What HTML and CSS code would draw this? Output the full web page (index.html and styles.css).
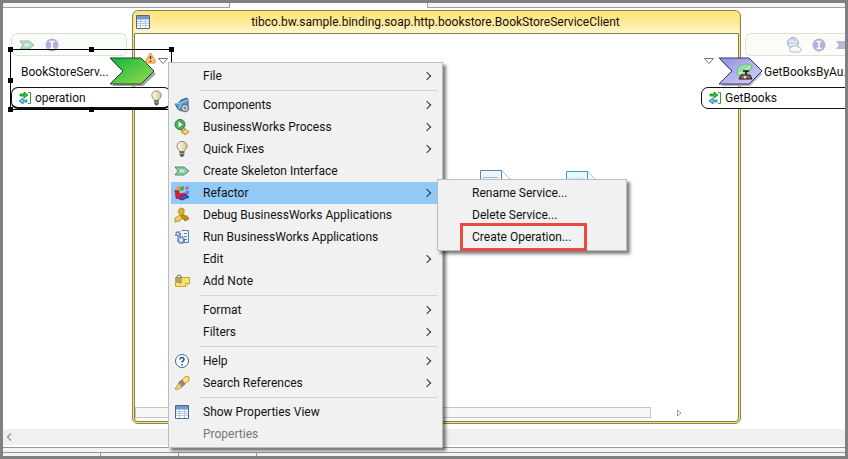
FILE: index.html
```html
<!DOCTYPE html>
<html lang="en">

<head>
    <meta charset="utf-8">
    <meta name="viewport" content="width=device-width, initial-scale=1.0">
    <title>BookStoreServiceClient</title>
    <link rel="stylesheet" href="styles.css">
</head>

<body>
    <svg class="defs" width="0" height="0" aria-hidden="true">
        <defs>
            <linearGradient id="green" x1="0" y1="0" x2="1" y2="1">
                <stop offset="0" stop-color="#12b53c" />
                <stop offset="1" stop-color="#9bdc50" />
            </linearGradient>
            <linearGradient id="violet" x1="0" y1="0" x2="1" y2="1">
                <stop offset="0" stop-color="#8f8fe0" />
                <stop offset="1" stop-color="#d6d6fa" />
            </linearGradient>
            <linearGradient id="glass" x1="0" y1="0" x2="1" y2="0">
                <stop offset="0" stop-color="#fffdf0" />
                <stop offset="1" stop-color="#d9c795" />
            </linearGradient>
            <symbol id="bulb" viewBox="0 0 16 16">
                <path d="M5.500 10.500C5.500 8.500 3 8 3 5a5 4.600 0 0 1 10 0c0 3-2.500 3.500-2.500 5.500z" fill="url(#glass)" stroke="#8f8468" />
                <path d="M6 11h4v3l-1 1.500H7L6 14z" fill="#666" stroke="#444" stroke-width=".6" />
                <path d="M6 12.500h4" stroke="#ccc" stroke-width=".7" />
            </symbol>
            <symbol id="swap" viewBox="0 0 14 14">
                <path d="M2 3h4V1l4 3-4 3V5H2z" fill="#35c832" stroke="#16801c" stroke-width=".8" />
                <path d="M9 9H5V7L1 10l4 3v-2h4z" fill="#5fd2e8" stroke="#19778e" stroke-width=".8" />
                <path d="M10 1.500h2.500v11H10" fill="none" stroke="#27a535" />
            </symbol>
            <symbol id="sheet" viewBox="0 0 14 14">
                <path d="M.5.5h13v13H.5z" fill="#fff" stroke="#4a6a94" />
                <path d="M1 1h12v3H1z" fill="#6f9bd0" />
                <path d="M1 4.500h12M1 6.500h12M1 8.500h12M1 10.500h12M4.500 4v9M9.500 4v9" stroke="#a5b9d4" stroke-width=".8" />
            </symbol>
            <symbol id="skeleton" viewBox="0 0 16 10">
                <path d="M1 1h9l5 4-5 4H1l3-4z" fill="#8fd3a6" stroke="#4d8d68" />
                <path d="M4 3h5.500L12 5 9.500 7H4l1.500-2z" fill="#bfe9ca" stroke="#62a87c" stroke-width=".6" />
            </symbol>
            <symbol id="port" viewBox="0 0 14 14">
                <circle cx="7" cy="7" r="6.500" fill="#8b7dc8" />
                <path d="M4.500 3.500h5M4.500 10.500h5M7 3.500v7" stroke="#fff" stroke-width="1.600" />
            </symbol>
        </defs>
    </svg>

    <div class="tabs">
        <span class="tab-first"></span>
        <span class="tab-active"></span>
        <span class="tab-rest"></span>
    </div>

    <main class="canvas">
        <section class="process">
            <h1><svg width="14" height="14"><use href="#sheet" /></svg><span>tibco.bw.sample.binding.soap.http.bookstore.BookStoreServiceClient</span></h1>
            <div class="process-body">
                <div class="documents">
                    <svg width="32" height="38" viewBox="0 0 32 38">
                        <path d="M.5.5h21l10 10v27H.5z" fill="#eef5fb" stroke="#5b86b0" />
                        <path d="M21.500.5v10h10" fill="#fff" stroke="#5b86b0" />
                        <path d="M3 7.500h15M3 14.500h25" stroke="#9bbcd9" />
                    </svg>
                    <svg width="32" height="38" viewBox="0 0 32 38">
                        <path d="M.5 1.500h21l10 10v26H.5z" fill="#e6f8fd" stroke="#3f9fc0" />
                        <path d="M21.500 1.500v10h10" fill="#fff" stroke="#3f9fc0" />
                        <path d="M3 7.500h15v10H3z" fill="#c9ecf6" />
                    </svg>
                </div>
                <div class="process-scroll">
                    <span class="thumb"></span>
                    <svg width="5" height="8" viewBox="0 0 5 8"><path d="M.5 1v6l3.500-3z" fill="#fff" stroke="#999" /></svg>
                </div>
            </div>
        </section>

        <div class="lane lane-left">
            <svg width="16" height="10"><use href="#skeleton" /></svg>
            <svg width="14" height="14"><use href="#port" /></svg>
        </div>

        <div class="lane lane-right">
            <svg width="16" height="16" viewBox="0 0 16 16">
                <circle cx="7" cy="6" r="5.500" fill="#a8bfdc" stroke="#7187ad" />
                <path d="M3 5c3-3 6 2 8-1M3 9c3-3 5 0 7-2" stroke="#fff" fill="none" />
                <path d="M6 15a2.500 2.500 0 0 1 0-5 3.500 3 0 0 1 6 0 2.500 2.500 0 0 1 1 5z" fill="#f2f5f8" stroke="#8894a4" />
            </svg>
            <svg width="14" height="14"><use href="#port" /></svg>
            <svg width="12" height="10" viewBox="0 0 12 10"><path d="M0 1h12v8H0l3-4z" fill="#9a83bd" /></svg>
        </div>

        <div class="node service">
            <div class="node-title">
                <span>BookStoreServ...</span>
                <svg width="48" height="30" viewBox="0 0 48 30">
                    <path d="M3 4h31l13 13-13 12H3l13-12z" fill="#a4a4a4" />
                    <path d="M1 1h31l13 13-13 13H1l13-13z" fill="url(#green)" stroke="#17452a" />
                </svg>
            </div>
            <div class="operation">
                <svg width="14" height="14"><use href="#swap" /></svg>
                <span>operation</span>
                <svg class="hint" width="15" height="16"><use href="#bulb" /></svg>
            </div>
            <svg class="warning" width="11" height="12" viewBox="0 0 11 12">
                <path d="M5.500 1L10 8v3H1V8z" fill="#ffc978" stroke="#d98a2b" stroke-linejoin="round" />
                <path d="M5.500 4v3M5.500 8.500v1.500" stroke="#5a3000" stroke-width="1.500" />
            </svg>
            <svg class="toggle" width="10" height="6" viewBox="0 0 10 6"><path d="M.5.5h9L5 5.500z" fill="#fff" stroke="#777" /></svg>
            <i class="handle top left"></i>
            <i class="handle top center"></i>
            <i class="handle top right"></i>
            <i class="handle middle left"></i>
            <i class="handle bottom left"></i>
            <i class="handle bottom center"></i>
        </div>

        <div class="node reference">
            <div class="node-title">
                <svg width="46" height="30" viewBox="0 0 46 30">
                    <path d="M3 4h29l12 13-12 12H3l13-12z" fill="#b4b4c4" />
                    <path d="M1 1h30l13 13-13 13H1l13-13z" fill="url(#violet)" stroke="#34346a" />
                    <path d="M19 13c1-4 6-6 10-6 4 0 6 2 4 5-2 4-8 7-14 6z" fill="#98dba3" stroke="#75b985" />
                    <path d="M21 16c3 0 9-3 11-7" stroke="#e6ffe8" fill="none" />
                    <path d="M25 14h6M28 14v4" stroke="#111" stroke-width="1.500" />
                    <path d="M23 18h9l2 4H21z" fill="#8d694d" stroke="#28180e" />
                    <circle cx="27" cy="20" r="1.500" fill="#e5dcce" />
                </svg>
                <span>GetBooksByAu..</span>
            </div>
            <div class="operation">
                <svg width="14" height="14"><use href="#swap" /></svg>
                <span>GetBooks</span>
            </div>
            <svg class="toggle" width="10" height="6" viewBox="0 0 10 6"><path d="M.5.5h9L5 5.500z" fill="#fff" stroke="#777" /></svg>
        </div>
    </main>

    <div class="scrollbar">
        <svg width="6" height="8" viewBox="0 0 6 8"><path d="M5 .5L1.500 4 5 7.500" fill="none" stroke="#999" stroke-width="1.500" /></svg>
    </div>
    <div class="sash"></div>
    <div class="views"><span></span><span></span><span></span></div>

    <!-- context menu -->
    <nav class="menu context">
        <button class="more">File</button>
        <hr>
        <button class="more">
            <svg width="16" height="16" viewBox="0 0 16 16">
                <path d="M1 7l4-1 2-3 6-2 1 2v8l-7 3-3-2z" fill="#4d9bd0" stroke="#245f8d" />
                <path d="M1 7l6-1 7-3M7 6l-2 6" fill="none" stroke="#9fd0ee" />
                <circle cx="11" cy="11" r="3.500" fill="#ddd" stroke="#707984" stroke-width="1.500" />
                <circle cx="11" cy="11" r="1" fill="#fff" stroke="#666" />
            </svg>Components</button>
        <button class="more">
            <svg width="16" height="16" viewBox="0 0 16 16">
                <circle cx="6" cy="5.500" r="5" fill="#4fae58" stroke="#2a7b36" />
                <path d="M4.500 2.500v6l4-3z" fill="#fff" />
                <path d="M7 11l3 1V9l5 4-4 3-1-2H8z" fill="#f7dc65" stroke="#a27a18" stroke-width=".8" />
            </svg>BusinessWorks Process</button>
        <button class="more"><svg width="16" height="16"><use href="#bulb" /></svg>Quick Fixes</button>
        <button><svg width="16" height="10"><use href="#skeleton" /></svg>Create Skeleton Interface</button>
        <button class="more active">
            <svg width="16" height="16" viewBox="0 0 16 16">
                <path d="M2 3l3-2 3 2-3 3z" fill="#e99826" />
                <path d="M6 2l4-1v4l-4 1z" fill="#3bb54a" />
                <path d="M11 2l3-1 1 3-3 1z" fill="#d555cc" />
                <path d="M1 5l4 1v3l6-1 4 4-7 3-6-2z" fill="#d51f38" stroke="#8e1028" stroke-width=".6" />
                <path d="M6 12l6-2 3 2-7 3z" fill="#3d58d2" stroke="#23348d" stroke-width=".6" />
                <path d="M12 6h3v3h-3z" fill="#4f86db" />
            </svg>Refactor</button>
        <button>
            <svg width="16" height="16" viewBox="0 0 16 16">
                <path d="M6 1l4 1v5l-3 2-3-4z" fill="#e0b02c" stroke="#a8781c" stroke-width=".7" />
                <path d="M1 11l5-3 3 2-3 4-5 1z" fill="#f1cc56" stroke="#a8781c" stroke-width=".7" />
                <path d="M8 8l5 1 2 3-4 2-4-4z" fill="#c78d1c" stroke="#936514" stroke-width=".7" />
            </svg>Debug BusinessWorks Applications</button>
        <button>
            <svg width="16" height="16" viewBox="0 0 16 16">
                <path d="M7.500 1.500h7v12h-6" fill="#eaf2fd" stroke="#5b7fb5" />
                <path d="M10 4.500h3M10 7.500h3M10 10.500h3" stroke="#5e82b8" />
                <circle cx="4" cy="5" r="2" fill="#dce8f7" stroke="#5579b4" stroke-width="2" stroke-dasharray="1.500 .6" />
                <circle cx="7" cy="11" r="3" fill="#dce8f7" stroke="#5579b4" stroke-width="2" stroke-dasharray="1.800 .6" />
            </svg>Run BusinessWorks Applications</button>
        <button class="more">Edit</button>
        <button>
            <svg width="16" height="16" viewBox="0 0 16 16">
                <path d="M1.500 4.500h14v6l-4 3h-10z" fill="#f8e36d" stroke="#c6a72b" />
                <path d="M15.500 10.500h-4v3" fill="#fff4a8" stroke="#c6a72b" />
                <path d="M3 10V4a1.500 1.500 0 0 1 4 0v5a1 1 0 0 1-2 0V5" fill="none" stroke="#6e6857" />
            </svg>Add Note</button>
        <hr>
        <button class="more">Format</button>
        <button class="more">Filters</button>
        <hr>
        <button class="more">
            <svg width="16" height="16" viewBox="0 0 16 16">
                <circle cx="8" cy="8" r="6.500" fill="#fff" stroke="#356a9b" />
                <path d="M6 6.500C6 3.500 10 4 10 6.500 10 8 8 8 8 9.500M8 11v1.500" fill="none" stroke="#28598c" stroke-width="1.600" />
            </svg>Help</button>
        <button class="more">
            <svg width="16" height="16" viewBox="0 0 16 16">
                <path d="M8 5l4-4 3 1v4l-5 3z" fill="#ffe27a" stroke="#c99a31" />
                <path d="M5 7l3-2 3 4-3 3-3-1z" fill="#9b8b8f" stroke="#6d6268" stroke-width=".7" />
                <path d="M5 8l-4 6 2 1 5-3z" fill="#f6c98c" stroke="#bc8848" stroke-width=".8" />
            </svg>Search References</button>
        <hr>
        <button><svg width="14" height="14"><use href="#sheet" /></svg>Show Properties View</button>
        <button disabled>Properties</button>
    </nav>

    <nav class="menu submenu">
        <button>Rename Service...</button>
        <button>Delete Service...</button>
        <button class="marked">Create Operation...</button>
    </nav>
</body>

</html>
```

FILE: styles.css
```css
*,
*::before,
*::after {
    box-sizing: border-box;
}

body {
    margin: 0;
    height: 100vh;
    border: 3px solid #808080;
    display: flex;
    flex-direction: column;
    position: relative;
    overflow: hidden;
    background: #fff;
    color: #111;
    font: 12px/16px Roboto, "Open Sans", sans-serif;
}

svg {
    display: block;
    flex: none;
}

.defs {
    position: absolute;
}

.tabs {
    display: flex;
    height: 5px;
}

.tab-first,
.tab-rest {
    background: #f5f5f5;
    border-bottom: 1px solid #a0a0a0;
}

.tab-first {
    width: 27%;
    border-right: 1px solid #a0a0a0;
}

.tab-active {
    width: 197px;
}

.tab-rest {
    flex: 1;
    border-left: 1px solid #a0a0a0;
}

/* editor canvas */

.canvas {
    flex: 1;
    display: flex;
    position: relative;
    overflow: hidden;
    padding: 2px 104px 5px 129px;
}

.process {
    flex: 1;
    display: flex;
    flex-direction: column;
    padding: 0 1px 1px;
    background: #ffe36c;
    border: 1px solid #8b8455;
    border-radius: 6px;
}

h1 {
    display: flex;
    align-items: center;
    height: 22px;
    margin: 0;
    padding: 0 18px 0 2px;
    border-radius: 5px 5px 0 0;
    background: linear-gradient(#ffe474, #ffeb98 50%, #fff6cd);
    font-size: 12px;
    font-weight: normal;
}

h1 span {
    flex: 1;
    text-align: center;
}

.process-body {
    flex: 1;
    display: flex;
    flex-direction: column;
    justify-content: space-between;
    background: #fff;
    border: 1px solid #85804f;
    border-radius: 0 0 4px 4px;
}

.documents {
    display: flex;
    justify-content: flex-end;
    gap: 54px;
    padding: 136px 140px 0 0;
}

.process-scroll {
    display: flex;
    align-items: center;
    gap: 26px;
    padding: 0 56px 3px 0;
}

.thumb {
    flex: 1;
    height: 11px;
    background: #f7f7f7;
    border: 1px solid #c6c6c6;
}

.lane {
    position: absolute;
    top: 25px;
    display: flex;
    align-items: center;
    height: 23px;
    border: 1px solid #d6e4d2;
    background: #fafcf8;
    border-radius: 6px;
}

.lane svg {
    opacity: .6;
}

.lane-left {
    left: 8px;
    width: 116px;
    padding-left: 7px;
    gap: 10px;
}

.lane-right {
    right: -8px;
    width: 108px;
    padding-left: 40px;
    gap: 10px;
    border-color: #e0e0d4;
}

.node {
    position: absolute;
}

.node-title {
    display: flex;
    align-items: center;
    height: 30px;
}

.operation {
    display: flex;
    align-items: center;
    gap: 3px;
    height: 22px;
    padding: 0 6px;
    background: #fff;
    border: 1px solid #111;
    border-radius: 7px;
}

.hint {
    margin-left: auto;
}

.service {
    left: 7px;
    top: 41px;
    width: 162px;
    padding-top: 7px;
    border: 1px solid #000;
}

.service .node-title {
    justify-content: space-between;
    padding: 0 14px 0 10px;
}

.service .operation {
    border-bottom-width: 2px;
}

.reference {
    right: -8px;
    top: 49px;
    width: 152px;
}

.reference .node-title {
    padding-left: 17px;
    white-space: nowrap;
}

.warning {
    position: absolute;
    right: 15px;
    top: 2px;
}

.toggle {
    position: absolute;
    right: 3px;
    top: 8px;
}

.reference .toggle {
    left: 3px;
    top: 1px;
}

.handle {
    position: absolute;
    width: 5px;
    height: 5px;
    background: #000;
}

.handle.top { top: -3px; }
.handle.middle { top: 28px; }
.handle.bottom { bottom: -3px; }
.handle.left { left: -3px; }
.handle.center { left: 78px; }
.handle.right { right: -3px; }

/* bottom of the editor */

.scrollbar {
    height: 16px;
    padding: 4px 3px;
    background: #f0f0f0;
}

.sash {
    flex: none;
    height: 6px;
    margin-top: 2px;
    background: #f2f4f2;
    border-top: 1px solid #949a94;
    border-bottom: 1px solid #949a94;
}

.views {
    display: flex;
    height: 3px;
    padding-left: 97px;
    background: #f2f4f2;
}

.views span {
    width: 78px;
    border-left: 1px solid #949a94;
}

/* menus */

.menu {
    position: absolute;
    padding: 2px;
    background: #f1f1f1;
    border: 1px solid #bcbcbc;
    box-shadow: 3px 3px 3px rgba(0, 0, 0, .5);
}

.context {
    left: 165px;
    top: 59px;
    width: 275px;
}

.submenu {
    left: 434px;
    top: 176px;
    width: 190px;
}

.menu button {
    display: flex;
    align-items: center;
    position: relative;
    width: 100%;
    height: 22px;
    padding: 0 0 0 32px;
    border: 0;
    background: none;
    color: #111;
    font: inherit;
    text-align: left;
}

/* icons sit in the gutter left of the label */
.menu button svg {
    width: 16px;
    margin: 0 13px 0 -29px;
}

.menu button:disabled {
    color: #777;
}

.menu .active {
    background: #91c9f7;
}

.menu hr {
    height: 1px;
    margin: 3px 2px 3px 29px;
    border: 0;
    background: #d4d4d4;
}

.more::after {
    content: "";
    width: 6px;
    height: 6px;
    margin: 0 10px 0 auto;
    border-top: 1px solid #333;
    border-right: 1px solid #333;
    transform: rotate(45deg);
}

.marked::before {
    content: "";
    position: absolute;
    left: 20px;
    top: -3px;
    width: 127px;
    height: 28px;
    border: 3px solid #ea4a44;
}
```
